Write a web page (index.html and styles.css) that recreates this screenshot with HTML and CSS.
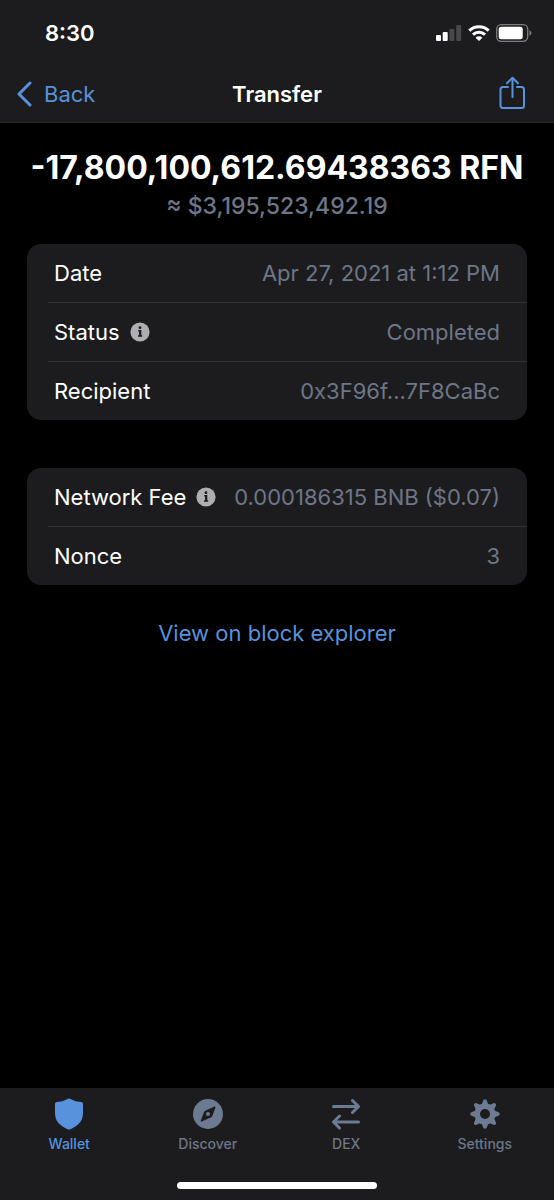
FILE: index.html
```html
<!DOCTYPE html>
<html lang="en">
<head>
<meta charset="utf-8">
<meta name="viewport" content="width=device-width, initial-scale=1">
<title>Transfer</title>
<link rel="stylesheet" href="styles.css">
</head>
<body>
<div class="screen">
  <header class="header">
    <div class="status-bar">
      <time class="clock">8:30</time>
      <div class="indicators">
        <svg width="26" height="16" viewBox="0 0 26 16" fill="#fff" aria-hidden="true">
          <rect x="0" y="10" width="5" height="6" rx="1"/>
          <rect x="6.700" y="7" width="5" height="9" rx="1"/>
          <rect x="13.400" y="4" width="5" height="12" rx="1" fill="#48484a"/>
          <rect x="20.200" y="0" width="5" height="16" rx="1" fill="#48484a"/>
        </svg>
        <svg width="22" height="16" viewBox="0 0 22 16" fill="none" stroke="#fff" stroke-width="3" aria-hidden="true">
          <path d="M1.300 5.600a14 14 0 0 1 19.400 0"/>
          <path d="M5 9.700a8.700 8.700 0 0 1 12 0"/>
          <path d="M11 16 7.600 12.700a4.800 4.800 0 0 1 6.800 0z" fill="#fff" stroke="none"/>
        </svg>
        <svg width="36" height="18" viewBox="0 0 36 18" aria-hidden="true">
          <rect x=".7" y=".7" width="31" height="16.600" rx="4.500" fill="none" stroke="#7d7d80" stroke-width="1.300"/>
          <rect x="2.700" y="2.700" width="24" height="12.600" rx="2.500" fill="#fff"/>
          <path d="M33.500 6.200q2 1 2 2.800t-2 2.800z" fill="#7d7d80"/>
        </svg>
      </div>
    </div>
    <nav class="nav-bar">
      <button class="back" type="button">
        <svg width="16" height="26" viewBox="0 0 16 26" fill="none" stroke="currentColor" stroke-width="3" stroke-linecap="round" stroke-linejoin="round" aria-hidden="true"><path d="M14 2 3 13l11 11"/></svg>
        Back
      </button>
      <h1 class="title">Transfer</h1>
      <button class="share" type="button" aria-label="Share">
        <svg width="27" height="36" viewBox="0 0 27 36" fill="none" stroke="currentColor" stroke-width="2" stroke-linecap="round" stroke-linejoin="round" aria-hidden="true">
          <path d="M9 11H4a2.500 2.500 0 0 0-2.500 2.500v16A2.500 2.500 0 0 0 4 32h18.500a2.500 2.500 0 0 0 2.500-2.500v-16a2.500 2.500 0 0 0-2.500-2.500H18"/>
          <path d="M13.500 21V2M8 7.200 13.500 1.800 19 7.200"/>
        </svg>
      </button>
    </nav>
  </header>

  <main class="content">
    <p class="amount">-17,800,100,612.69438363 RFN</p>
    <p class="fiat">≈ $3,195,523,492.19</p>

    <dl class="card">
      <div class="row"><dt>Date</dt><dd>Apr 27, 2021 at 1:12 PM</dd></div>
      <div class="row">
        <dt>Status
          <button class="info" type="button" aria-label="About status"><svg width="20" height="20" viewBox="0 0 20 20" aria-hidden="true"><circle cx="10" cy="10" r="9.600" fill="#aeaeb2"/><path d="M8.200 8.800h2v5M8 14h4.200" fill="none" stroke="#1c1c1e" stroke-width="1.400"/><path d="M10.200 8.100v6" stroke="#1c1c1e" stroke-width="2.200"/><circle cx="10" cy="5.700" r="1.400" fill="#1c1c1e"/></svg></button>
        </dt>
        <dd>Completed</dd>
      </div>
      <div class="row"><dt>Recipient</dt><dd>0x3F96f...7F8CaBc</dd></div>
    </dl>

    <dl class="card">
      <div class="row">
        <dt>Network Fee
          <button class="info" type="button" aria-label="About network fee"><svg width="20" height="20" viewBox="0 0 20 20" aria-hidden="true"><circle cx="10" cy="10" r="9.600" fill="#aeaeb2"/><path d="M8.200 8.800h2v5M8 14h4.200" fill="none" stroke="#1c1c1e" stroke-width="1.400"/><path d="M10.200 8.100v6" stroke="#1c1c1e" stroke-width="2.200"/><circle cx="10" cy="5.700" r="1.400" fill="#1c1c1e"/></svg></button>
        </dt>
        <dd>0.000186315 BNB ($0.07)</dd>
      </div>
      <div class="row"><dt>Nonce</dt><dd>3</dd></div>
    </dl>

    <a class="explorer" href="#">View on block explorer</a>
  </main>

  <footer class="footer">
    <nav class="tabs">
      <a class="tab active" href="#" aria-current="page">
        <svg width="32" height="32" viewBox="0 0 32 32" fill="currentColor" aria-hidden="true"><path d="M16 .5q1 0 2 .8 4 2.500 10 2.700 2 .1 2 2v9c0 8-4.500 12.500-12.500 16.200q-1.500.6-3 0C6.500 27.500 2 23 2 15V6q0-1.900 2-2 6-.2 10-2.700 1-.8 2-.8z"/></svg>
        Wallet
      </a>
      <a class="tab" href="#">
        <svg width="32" height="32" viewBox="0 0 32 32" fill="#6d7b92" aria-hidden="true"><circle cx="16" cy="16" r="15"/><path d="M22.500 8.500q1.300-.3.900 1.200l-3.100 8.200q-.4 1-1.200 1.400l-9.300 4.200q-1.400.4-1-1l3.300-8.400q.4-1 1.200-1.400z" fill="#1c1c1e"/><circle cx="16" cy="16" r="2"/></svg>
        Discover
      </a>
      <a class="tab" href="#">
        <svg width="32" height="32" viewBox="0 0 32 32" fill="none" stroke="#6d7b92" stroke-width="3" stroke-linecap="round" stroke-linejoin="round" aria-hidden="true"><path d="M3.500 8.500h25M22.500 2.500l6 6-6 6M28.500 24h-25M9.500 18l-6 6 6 6"/></svg>
        DEX
      </a>
      <a class="tab" href="#">
        <svg width="32" height="32" viewBox="0 0 32 32" fill="#6d7b92" aria-hidden="true">
          <defs><path id="tooth" d="M-5-8Q-2.500-10-2-13-1.700-14.800 0-14.800 1.700-14.800 2-13 2.500-10 5-8z"/></defs>
          <g transform="translate(16 16)">
            <circle r="7.800" fill="none" stroke="#6d7b92" stroke-width="5.600"/>
            <use href="#tooth"/><use href="#tooth" transform="rotate(45)"/><use href="#tooth" transform="rotate(90)"/><use href="#tooth" transform="rotate(135)"/><use href="#tooth" transform="rotate(180)"/><use href="#tooth" transform="rotate(225)"/><use href="#tooth" transform="rotate(270)"/><use href="#tooth" transform="rotate(315)"/>
          </g>
        </svg>
        Settings
      </a>
    </nav>
    <div class="home-indicator"></div>
  </footer>
</div>
</body>
</html>
```
FILE: styles.css
```css
* {
  box-sizing: border-box;
}

body {
  margin: 0;
  background: #000;
  color: #fff;
  font-family: Inter, "Liberation Sans", sans-serif;
  font-size: 22px;
  line-height: 28px;
}

p, h1, dl, dd {
  margin: 0;
}

button {
  padding: 0;
  border: 0;
  background: none;
  color: inherit;
  font: inherit;
  cursor: pointer;
}

a {
  color: inherit;
  text-decoration: none;
}

svg {
  display: block;
  flex: none;
}

.screen {
  display: flex;
  flex-direction: column;
  min-height: 100vh;
}

.header {
  background: #1c1c1e;
  border-bottom: 1px solid #262628;
}

.status-bar {
  display: flex;
  align-items: center;
  justify-content: space-between;
  height: 66px;
  padding: 0 22px 0 45px;
}

.clock {
  font-weight: 600;
}

.indicators {
  display: flex;
  align-items: center;
  gap: 6px;
}

.nav-bar {
  display: grid;
  grid-template-columns: 1fr auto 1fr;
  align-items: center;
  height: 56px;
  padding: 0 16px;
}

.back {
  display: flex;
  align-items: center;
  justify-self: start;
  gap: 12px;
  color: #5891dc;
}

.title {
  font-size: 22px;
  font-weight: 600;
}

.share {
  justify-self: end;
  margin-right: 12px;
  color: #5891dc;
}

.content {
  display: flex;
  flex: 1;
  flex-direction: column;
  align-items: center;
  padding: 25px 27px;
}

.amount {
  font-size: 32px;
  font-weight: 700;
  line-height: 40px;
  white-space: nowrap;
}

.fiat {
  margin-top: 4px;
  color: #6e7687;
  font-size: 23px;
  font-weight: 500;
}

.card {
  width: 100%;
  margin-top: 24px;
  padding-left: 21px;
  border-radius: 14px;
  background: #1c1c1e;
}

.card + .card {
  margin-top: 48px;
}

.row {
  display: flex;
  align-items: center;
  justify-content: space-between;
  height: 58px;
  padding: 0 27px 0 6px;
}

.row + .row {
  height: 59px;
  border-top: 1px solid #323234;
}

.row dt {
  display: flex;
  align-items: center;
  gap: 10px;
}

.row dd {
  color: #6e7687;
}

.explorer {
  margin-top: 34px;
  color: #5891dc;
}

.footer {
  display: flex;
  flex-direction: column;
  align-items: center;
  justify-content: space-between;
  height: 112px;
  padding: 10px 0 11px;
  background: #1c1c1e;
}

.tabs {
  display: grid;
  grid-template-columns: repeat(4, 1fr);
  width: 100%;
}

.tab {
  display: flex;
  flex-direction: column;
  align-items: center;
  gap: 6px;
  color: #6e7687;
  font-size: 14px;
  font-weight: 500;
  line-height: 16px;
}

.tab.active {
  color: #5891dc;
}

.home-indicator {
  width: 36%;
  height: 7px;
  border-radius: 4px;
  background: #fff;
}
```
